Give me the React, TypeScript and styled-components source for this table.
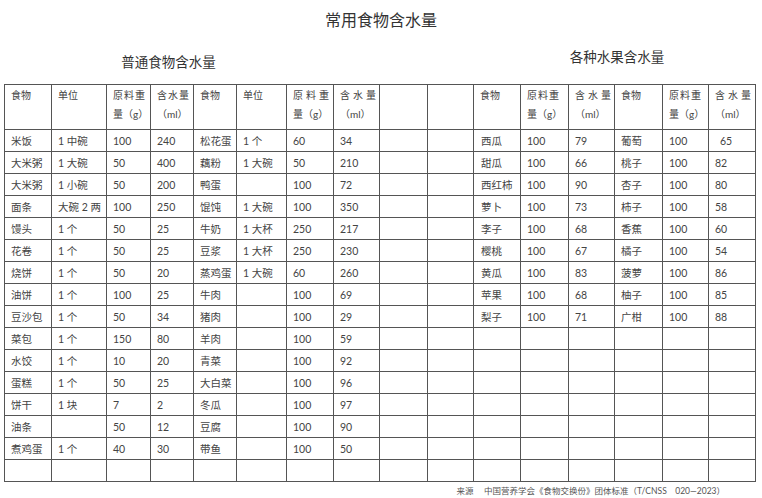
import React from 'react';
import styled, { createGlobalStyle } from 'styled-components';

const GlobalStyle = createGlobalStyle`
  html, body {
    margin: 0;
    padding: 0;
    background: #fff;
  }
  body {
    font-family: "Lato", "Noto Sans CJK SC", sans-serif;
    color: #444;
  }
`;

const Page = styled.div`
  width: 762px;
  height: 498px;
  box-sizing: border-box;
  padding: 0 4px;
  display: flex;
  flex-direction: column;
  overflow: hidden;
`;

const Title = styled.h1`
  margin: 0;
  height: 40px;
  line-height: 40px;
  text-align: center;
  font-size: 16px;
  font-weight: 400;
  color: #333;
`;

const SubRow = styled.div`
  height: 44px;
  display: flex;
  justify-content: space-between;
`;

const Subtitle = styled.h2<{ $width: number; $top: number }>`
  margin: 0;
  width: ${(p) => p.$width}px;
  padding-top: ${(p) => p.$top}px;
  line-height: 20px;
  text-align: center;
  font-size: 13.5px;
  font-weight: 400;
  color: #333;
`;

const Table = styled.table`
  width: 751px;
  border-collapse: collapse;
  table-layout: fixed;
  font-size: 10.5px;
`;

const HeadCell = styled.th`
  height: 45px;
  box-sizing: border-box;
  border: 1.5px solid #555;
  padding: 1px 0 0 6px;
  vertical-align: top;
  text-align: left;
  font-weight: 400;
  font-size: 10px;
  line-height: 19px;
  white-space: nowrap;
`;

const HeadLine = styled.div<{ $spacing: number }>`
  letter-spacing: ${(p) => p.$spacing}px;
`;

const Cell = styled.td<{ $indent?: number }>`
  height: 22px;
  box-sizing: border-box;
  border: 1.5px solid #555;
  padding: 0 0 0 ${(p) => p.$indent ?? 6}px;
  vertical-align: middle;
  white-space: nowrap;
  overflow: hidden;
`;

const Footer = styled.div`
  height: 16px;
  line-height: 18px;
  text-align: right;
  padding-right: 33px;
  font-size: 8.5px;
  color: #555;
  white-space: pre;
`;

const widths = [47, 55, 44, 43, 43, 50, 47, 46, 48, 46, 47, 48, 46, 48, 46, 47];

type Head = { lines: string[]; spacing?: number };

const weight: Head = { lines: ['原料重', '量（g）'], spacing: 1 };
const water: Head = { lines: ['含水量', '（ml）'], spacing: 1 };
const wideWeight: Head = { lines: ['原料重', '量（g）'], spacing: 3 };
const wideWater: Head = { lines: ['含水量', '（ml）'], spacing: 3 };

const heads: Head[] = [
  { lines: ['食物'] },
  { lines: ['单位'] },
  weight,
  water,
  { lines: ['食物'] },
  { lines: ['单位'] },
  wideWeight,
  wideWater,
  { lines: [] },
  { lines: [] },
  { lines: ['食物'] },
  weight,
  wideWater,
  { lines: ['食物'] },
  weight,
  wideWater,
];

const common: string[][] = [
  ['米饭', '1 中碗', '100', '240', '松花蛋', '1 个', '60', '34'],
  ['大米粥', '1 大碗', '50', '400', '藕粉', '1 大碗', '50', '210'],
  ['大米粥', '1 小碗', '50', '200', '鸭蛋', '', '100', '72'],
  ['面条', '大碗 2 两', '100', '250', '馄饨', '1 大碗', '100', '350'],
  ['馒头', '1 个', '50', '25', '牛奶', '1 大杯', '250', '217'],
  ['花卷', '1 个', '50', '25', '豆浆', '1 大杯', '250', '230'],
  ['烧饼', '1 个', '50', '20', '蒸鸡蛋', '1 大碗', '60', '260'],
  ['油饼', '1 个', '100', '25', '牛肉', '', '100', '69'],
  ['豆沙包', '1 个', '50', '34', '猪肉', '', '100', '29'],
  ['菜包', '1 个', '150', '80', '羊肉', '', '100', '59'],
  ['水饺', '1 个', '10', '20', '青菜', '', '100', '92'],
  ['蛋糕', '1 个', '50', '25', '大白菜', '', '100', '96'],
  ['饼干', '1 块', '7', '2', '冬瓜', '', '100', '97'],
  ['油条', '', '50', '12', '豆腐', '', '100', '90'],
  ['煮鸡蛋', '1 个', '40', '30', '带鱼', '', '100', '50'],
  ['', '', '', '', '', '', '', ''],
];

const fruit: string[][] = [
  ['西瓜', '100', '79', '葡萄', '100', '65'],
  ['甜瓜', '100', '66', '桃子', '100', '82'],
  ['西红柿', '100', '90', '杏子', '100', '80'],
  ['萝卜', '100', '73', '柿子', '100', '58'],
  ['李子', '100', '68', '香蕉', '100', '60'],
  ['樱桃', '100', '67', '橘子', '100', '54'],
  ['黄瓜', '100', '83', '菠萝', '100', '86'],
  ['苹果', '100', '68', '柚子', '100', '85'],
  ['梨子', '100', '71', '广柑', '100', '88'],
];

const rows = common.map((left, i) => [
  ...left,
  '',
  '',
  ...(fruit[i] ?? ['', '', '', '', '', '']),
]);

const App: React.FC = () => (
  <>
    <GlobalStyle />
    <Page>
      <Title>常用食物含水量</Title>
      <SubRow>
        <Subtitle $width={329} $top={12}>普通食物含水量</Subtitle>
        <Subtitle $width={282} $top={7}>各种水果含水量</Subtitle>
      </SubRow>
      <Table>
        <colgroup>
          {widths.map((w, i) => (
            <col key={i} style={{ width: w }} />
          ))}
        </colgroup>
        <thead>
          <tr>
            {heads.map((h, i) => (
              <HeadCell key={i}>
                {h.lines.map((l, j) => (
                  <HeadLine key={j} $spacing={j === 0 ? h.spacing ?? 0 : 0}>
                    {l}
                  </HeadLine>
                ))}
              </HeadCell>
            ))}
          </tr>
        </thead>
        <tbody>
          {rows.map((r, i) => (
            <tr key={i}>
              {r.map((c, j) => (
                <Cell key={j} $indent={i === 0 && j === 15 ? 11 : j === 10 ? 7 : 6}>
                  {c}
                </Cell>
              ))}
            </tr>
          ))}
        </tbody>
      </Table>
      <Footer>{'来源　 中国营养学会《食物交换份》团体标准（T/CNSS　020—2023）'}</Footer>
    </Page>
  </>
);

export default App;
